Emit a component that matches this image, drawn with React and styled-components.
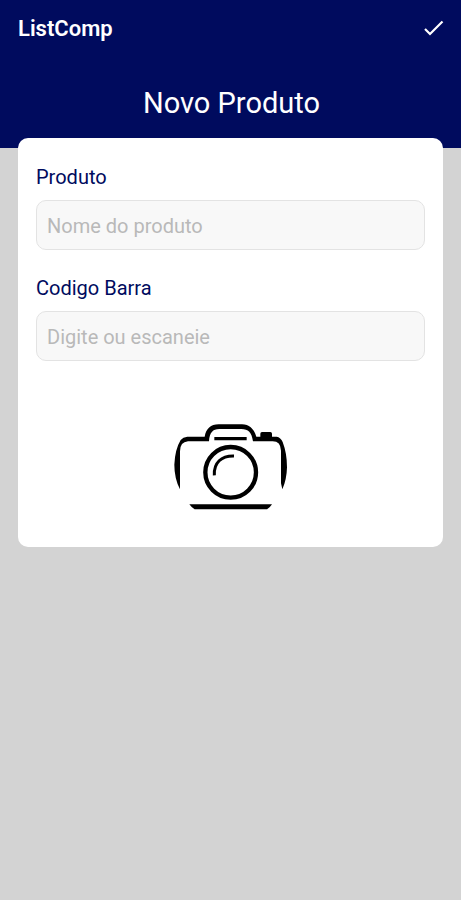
import React, { useState } from "react";
import styled, { createGlobalStyle } from "styled-components";

const GlobalStyle = createGlobalStyle`
  * {
    box-sizing: border-box;
  }
  body {
    margin: 0;
    background-color: #d3d3d3;
    font-family: Roboto, sans-serif;
  }
`;

const HeaderStyled = styled.header`
  height: 148px;
  padding: 0 16px 0 18px;
  background-color: #000b5e;
  color: #ffffff;
`;

const ToolbarStyled = styled.div`
  display: flex;
  align-items: center;
  justify-content: space-between;
  height: 58px;
`;

const AppName = styled.span`
  font-size: 22px;
  font-weight: 600;
  line-height: 28px;
`;

const ConfirmButton = styled.button`
  display: flex;
  padding: 0;
  border: none;
  background: none;
  color: inherit;
  cursor: pointer;
`;

const Title = styled.h1`
  margin: 27px 0 0;
  font-size: 29px;
  font-weight: 400;
  line-height: 36px;
  text-align: center;
`;

const CardStyled = styled.form`
  display: flex;
  flex-direction: column;
  margin: -10px 18px 0;
  padding: 27px 18px 35px;
  background-color: #ffffff;
  border-radius: 10px;
`;

const FieldStyled = styled.div`
  display: flex;
  flex-direction: column;
  gap: 11px;
  margin-bottom: 26px;
  label {
    font-size: 20px;
    line-height: 24px;
    color: #000b5e;
  }
  input {
    width: 100%;
    height: 50px;
    padding: 2px 10px 0;
    border: 1px solid #e3e3e3;
    border-radius: 10px;
    background-color: #f8f8f8;
    color: #333333;
    font-family: inherit;
    font-size: 20px;
  }
  input::placeholder {
    color: #b9b9b9;
    opacity: 1;
  }
`;

const ScanButton = styled.button`
  display: flex;
  align-self: center;
  margin-top: 37px;
  padding: 0;
  border: none;
  background: none;
  cursor: pointer;
`;

const CheckIcon = () => (
  <svg width="24" height="24" viewBox="0 0 24 24" fill="none" aria-hidden="true">
    <path d="M4 12 L9 17 L21.5 4.5" stroke="currentColor" strokeWidth="2.2" />
  </svg>
);

const CameraIcon = () => (
  <svg width="114" height="88" viewBox="42 42 342 264" fill="none" aria-hidden="true">
    <path
      fill="#000000"
      d="M82 80H134C138 56 152 43 176 43H246C268 43 282 57 289 80H301V71Q301 66 306 66H331Q336 66 336 71V80H350Q362 82 368 96Q381 130 381 172Q380 210 367 238L363 220V122Q362 94 338 94H279C275 67 265 57 244 57H178C158 57 149 68 147 94H84Q60 96 60 124V238Q43 205 43 164Q45 118 62 90Q69 81 82 80Z"
    />
    <path fill="#000000" d="M88 283H336Q330 293 321 298H104Q95 293 88 283Z" />
    <path d="M163 86H260" stroke="#000000" strokeWidth="10" />
    <circle cx="212" cy="187" r="76" stroke="#000000" strokeWidth="13" />
    <path d="M163 196C161 158 184 137 222 138" stroke="#000000" strokeWidth="9" />
  </svg>
);

const Field = ({ id, label, placeholder, value, onChange }) => {
  return (
    <FieldStyled>
      <label htmlFor={id}>{label}</label>
      <input
        id={id}
        type="text"
        placeholder={placeholder}
        value={value}
        onChange={(e) => onChange(e.target.value)}
      />
    </FieldStyled>
  );
};

const App = () => {
  const [name, setName] = useState("");
  const [barcode, setBarcode] = useState("");

  return (
    <>
      <GlobalStyle />
      <HeaderStyled>
        <ToolbarStyled>
          <AppName>ListComp</AppName>
          <ConfirmButton type="submit" form="product-form" aria-label="Salvar">
            <CheckIcon />
          </ConfirmButton>
        </ToolbarStyled>
        <Title>Novo Produto</Title>
      </HeaderStyled>
      <CardStyled id="product-form" onSubmit={(e) => e.preventDefault()}>
        <Field
          id="name"
          label="Produto"
          placeholder="Nome do produto"
          value={name}
          onChange={setName}
        />
        <Field
          id="barcode"
          label="Codigo Barra"
          placeholder="Digite ou escaneie"
          value={barcode}
          onChange={setBarcode}
        />
        <ScanButton type="button" aria-label="Escanear">
          <CameraIcon />
        </ScanButton>
      </CardStyled>
    </>
  );
};

export default App;
